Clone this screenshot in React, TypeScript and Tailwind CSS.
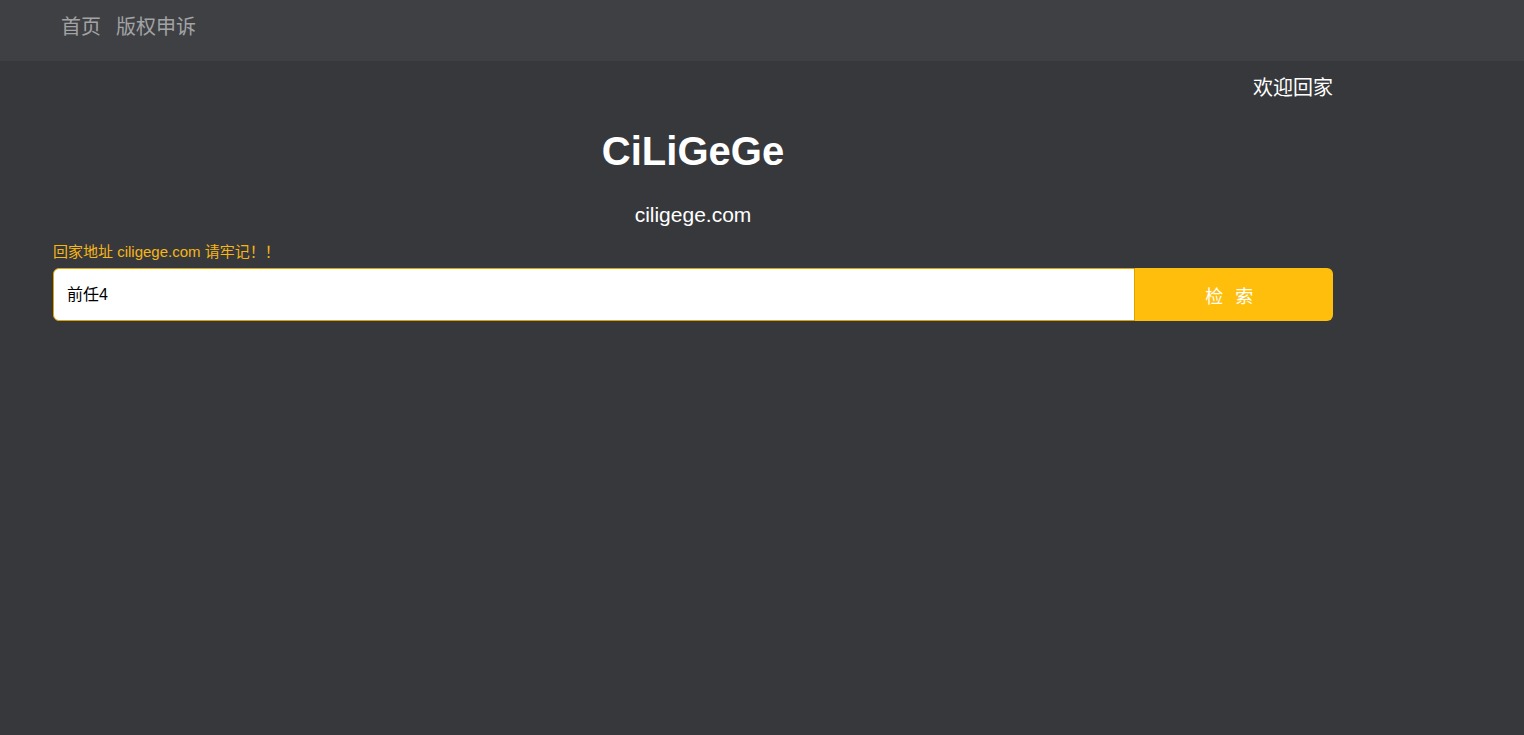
export default function App() {
  return (
    <div
      className="min-h-[735px] w-full bg-[#37383c]"
      style={{ fontFamily: '"Liberation Sans", "Noto Sans CJK SC", sans-serif' }}
    >
      <nav className="h-[61px] bg-[#3f4044] flex items-center pl-[61px] pb-[8px]">
        <a className="text-[20px] text-[#a2a3a5] leading-none">首页</a>
        <a className="ml-[15px] text-[20px] text-[#a2a3a5] leading-none">版权申诉</a>
      </nav>

      <main className="ml-[53px] w-[1280px]">
        <div className="flex justify-end pt-[15px]">
          <span className="text-[20px] leading-[24px] text-white">欢迎回家</span>
        </div>

        <h1 className="mt-[21px] text-center text-[40px] font-bold leading-[60px] text-white">
          CiLiGeGe
        </h1>

        <p className="mt-[22px] text-center text-[21px] leading-[24px] text-white">ciligege.com</p>

        <p className="mt-[15px] text-[15px] leading-[20px] text-[#f5b616]">
          回家地址 ciligege.com 请牢记！！
        </p>

        <form className="mt-[6px] flex h-[53px]" onSubmit={(e) => e.preventDefault()}>
          <input
            type="text"
            defaultValue="前任4"
            className="flex-1 rounded-l-[6px] border border-[#e0a400] bg-white px-[13px] text-[16px] text-black outline-none"
          />
          <button
            type="submit"
            className="w-[198px] rounded-r-[6px] bg-[#ffbe0b] pr-[6px] pt-[5px] text-[18px] tracking-[3.5px] text-white"
          >
            检 索
          </button>
        </form>
      </main>
    </div>
  );
}
